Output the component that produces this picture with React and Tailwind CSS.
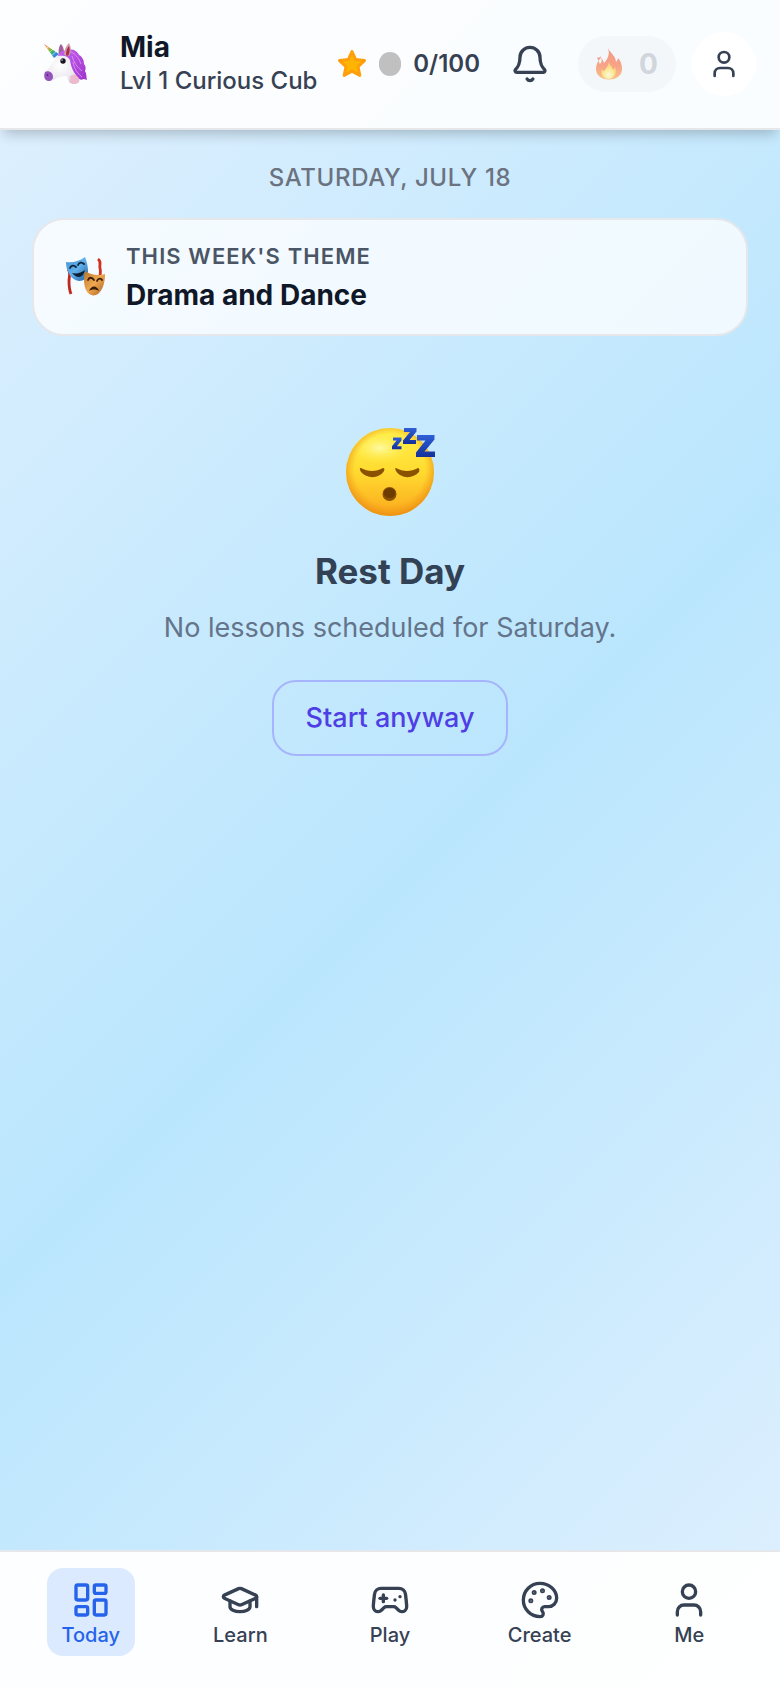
import { Bell, Gamepad2, GraduationCap, LayoutDashboard, Palette, User } from "lucide-react";

const NAV_ITEMS = [
  { label: "Today", icon: LayoutDashboard, active: true },
  { label: "Learn", icon: GraduationCap },
  { label: "Play", icon: Gamepad2 },
  { label: "Create", icon: Palette },
  { label: "Me", icon: User },
];

function Unicorn({ className }) {
  return (
    <svg viewBox="0 0 44 42" className={className} aria-hidden="true">
      <defs>
        <linearGradient id="horn" x1="0" y1="0" x2="1" y2="1">
          <stop offset="0" stopColor="#f0524f" />
          <stop offset="0.25" stopColor="#f4a93a" />
          <stop offset="0.5" stopColor="#4fb848" />
          <stop offset="0.75" stopColor="#2f8fe0" />
          <stop offset="1" stopColor="#6a4fd8" />
        </linearGradient>
        <radialGradient id="coat" cx="0.45" cy="0.4" r="0.7">
          <stop offset="0" stopColor="#ffffff" />
          <stop offset="0.6" stopColor="#eeeaf1" />
          <stop offset="1" stopColor="#d3b4c6" />
        </radialGradient>
        <linearGradient id="mane" x1="0" y1="0" x2="1" y2="1">
          <stop offset="0" stopColor="#c463ee" />
          <stop offset="1" stopColor="#a035cc" />
        </linearGradient>
      </defs>
      <path d="M15 12c-1-5 0-9 2-11 2 2 3 5 3 9z" fill="#a2609c" />
      <path
        d="M13 13c4-4 12-3 15 2 3 5 3 10 4 14 2 4 4 7 3 10-3 3-8 2-10 0-1-3-1-5-3-6-4 0-8 1-11 3-3 2-7 3-9 1-2-3-2-6 0-9 4-4 8-10 11-15z"
        fill="url(#coat)"
      />
      <path d="M26 33c1 2 1 5 0 7 3 1 7 1 9-1 1-3-1-6-2-8z" fill="#edb9cf" />
      <path d="M1 29c3-2 8 0 8 5 0 2-2 4-4 4-4 0-6-4-4-9z" fill="#9553bd" />
      <path
        d="M14 13c1-4 5-6 8-5 4-3 11-1 13 4 4 2 5 6 5 9 2 2 2 5 1 7 2 3 1 6 2 9-2-1-3-1-4-1-2 2-4 0-5-2-4-4-7-9-8-17-2-4-6-5-12-4z"
        fill="url(#mane)"
      />
      <path
        d="M27 9c6 3 8 7 10 12m-9-8c2 7 5 11 10 15m-9-9c1 6 4 11 9 15"
        fill="none"
        stroke="#db94f6"
        strokeWidth="0.9"
      />
      <path d="M20 12c0-5 2-9 5-12 2 4 3 9 0 13z" fill="#d49aa8" />
      <path d="M22 12c0-4 1-7 3-9 1 3 1 7-1 10z" fill="#a62f4a" />
      <path d="M0 1l15 10-5 4z" fill="url(#horn)" />
      <path d="M3 5l2-2M6 9l3-3M8 12l5-4" stroke="#fff" strokeWidth="0.5" />
      <circle cx="19" cy="18" r="2.7" fill="#1c1420" />
      <circle cx="18" cy="17" r="0.7" fill="#fff" />
      <circle cx="3.500" cy="32" r="0.9" fill="#5a2680" />
    </svg>
  );
}

function Star({ className }) {
  return (
    <svg viewBox="0 0 30 30" className={className} aria-hidden="true">
      <path
        d="M15 2.500l3.700 8.100 8.800 1-6.500 6 1.800 8.800-7.800-4.300-7.800 4.300L9 17.600l-6.500-6 8.800-1z"
        fill="#ffb400"
        stroke="#ff9f0c"
        strokeWidth="3"
        strokeLinejoin="round"
      />
    </svg>
  );
}

function Flame({ className }) {
  return (
    <svg viewBox="0 0 26 32" className={className} aria-hidden="true">
      <defs>
        <linearGradient id="flame" x1="0" y1="0" x2="0" y2="1">
          <stop offset="0" stopColor="#f4583a" />
          <stop offset="0.6" stopColor="#fb6f3c" />
          <stop offset="1" stopColor="#fda03a" />
        </linearGradient>
        <radialGradient id="core" cx="0.5" cy="0.75" r="0.6">
          <stop offset="0" stopColor="#fffbd0" />
          <stop offset="0.6" stopColor="#ffe04a" />
          <stop offset="1" stopColor="#ffb83c" />
        </radialGradient>
      </defs>
      <path
        d="M12 0c2 5 8 8 8 14 1-1 2-3 2-4 3 3 4 7 4 11 0 6-5 10.500-13 10.500S0 27 0 21c0-3 1-6 3-9 0 2 0 3 1 4 2-2 2-4 1-6 1 1 2 2 3 5 4-4 6-9 4-15z"
        fill="url(#flame)"
      />
      <path d="M1 9c1 1 3 1 4-1 0 2-1 4-3 4z" fill="#f4583a" />
      <path
        d="M13 14c0 3 4 5 4 8 1-1 2-2 2-3 2 5 0 11-6 12-6 0-9-5-7-10 1 1 1 2 2 2 2-2 4-5 5-9z"
        fill="url(#core)"
      />
    </svg>
  );
}

function Masks({ className }) {
  return (
    <svg viewBox="0 0 40 40" className={className} aria-hidden="true">
      <defs>
        <linearGradient id="comedy" x1="0" y1="0" x2="1" y2="1">
          <stop offset="0" stopColor="#3f92d6" />
          <stop offset="0.5" stopColor="#62b0ea" />
          <stop offset="1" stopColor="#1c5fa0" />
        </linearGradient>
        <linearGradient id="tragedy" x1="0" y1="0" x2="1" y2="1">
          <stop offset="0" stopColor="#b8742e" />
          <stop offset="0.5" stopColor="#f0a850" />
          <stop offset="1" stopColor="#a85f20" />
        </linearGradient>
      </defs>
      <path
        d="M2 12c3 4 1 8 1 12 0 5 0 8 2 13"
        fill="none"
        stroke="#c0281e"
        strokeWidth="2.800"
      />
      <path
        d="M32 2c4 3 1 6 2 9 1 4 0 6 0 9"
        fill="none"
        stroke="#d0301e"
        strokeWidth="2.800"
      />
      <path d="M0 5c7 1 14-1 19-5 2 5 3 10 3 15-1 6-4 9-9 9C5 23 0 14 0 5z" fill="url(#comedy)" />
      <path
        d="M4 11c1-3 4-3 6-1M12 8c1-3 4-3 6-1"
        fill="none"
        stroke="#0c2038"
        strokeWidth="1.800"
        strokeLinecap="round"
      />
      <path d="M6 16c5 1 9 0 13-3-1 4-3 7-6 7s-5-2-7-4z" fill="#0c2038" />
      <path
        d="M19 14c6 4 13 5 20 3 0 8-2 16-7 20-3 2-7 2-10-1-4-4-5-14-3-22z"
        fill="url(#tragedy)"
      />
      <path
        d="M22 23c1-3 4-3 6 0M31 24c1-3 4-3 5-1"
        fill="none"
        stroke="#3a1c08"
        strokeWidth="1.800"
        strokeLinecap="round"
      />
      <path d="M23 34c2-6 8-6 10 0-3-2-7-2-10 0z" fill="#3a1c08" />
    </svg>
  );
}

function SleepingFace({ className }) {
  return (
    <svg viewBox="0 0 96 96" className={className} aria-hidden="true">
      <defs>
        <linearGradient id="face" x1="0" y1="0" x2="0" y2="1">
          <stop offset="0" stopColor="#fff04a" />
          <stop offset="0.5" stopColor="#ffdb30" />
          <stop offset="1" stopColor="#fba81c" />
        </linearGradient>
        <radialGradient id="rim" cx="0.5" cy="0.47" r="0.54">
          <stop offset="0.74" stopColor="#f59a1a" stopOpacity="0" />
          <stop offset="1" stopColor="#e88a10" stopOpacity="0.85" />
        </radialGradient>
        <radialGradient id="shine" cx="0.5" cy="0.5" r="0.5">
          <stop offset="0" stopColor="#fffcb0" stopOpacity="0.9" />
          <stop offset="1" stopColor="#fff04a" stopOpacity="0" />
        </radialGradient>
        <linearGradient id="zed" x1="0" y1="0" x2="0" y2="1">
          <stop offset="0" stopColor="#2f5fd8" />
          <stop offset="1" stopColor="#14309c" />
        </linearGradient>
      </defs>
      <circle cx="48" cy="50" r="44" fill="url(#face)" />
      <ellipse cx="38" cy="26" rx="30" ry="16" fill="url(#shine)" />
      <circle cx="48" cy="50" r="44" fill="url(#rim)" />
      <path
        d="M19 46c7 4 15 4 22 0 1 0 2 1 1 3-5 8-17 8-23 1-1-2-2-4 0-4zM54 46c7 4 15 4 22 0 1 0 2 2 1 4-6 7-18 7-23-1-1-2-1-3 0-3z"
        fill="#8a5200"
      />
      <circle cx="47.500" cy="72" r="7" fill="#8a5200" />
      <path d="M42 69c3-4 9-4 11 0 1 4-1 7-5 7-5 0-7-3-6-7z" fill="#6e3c00" />
      <g fill="url(#zed)">
        <path d="M51 15.500h8.500v3l-4.600 5.700h4.600v3H50v-3l4.600-5.700H51z" />
        <path d="M62 6h12.500v3.500l-7 8.500H74v4H61v-3.500L68 10h-6z" />
        <path d="M75 13h17.500v4.500L82.500 29.500H93v5.500H74V30.500l9.500-12H75z" />
      </g>
    </svg>
  );
}

export default function App() {
  return (
    <div className="flex min-h-screen flex-col bg-linear-135 from-[#e0f0fe] via-[#bae6fd] via-52% to-[#e0f0fe] font-['Inter',sans-serif]">
      <header className="flex h-[130px] items-center border-b-2 border-gray-200 bg-white/90 pl-10 pr-6 shadow-[0_8px_12px_-4px_rgba(0,0,0,0.22)]">
        <Unicorn className="mx-1 h-[42px] w-[44px] shrink-0" />
        <div className="ml-7 whitespace-nowrap">
          <p className="text-[28px] leading-[34px] font-bold text-gray-900">Mia</p>
          <p className="text-[24px] leading-[34px] font-medium text-gray-700">Lvl 1 Curious Cub</p>
        </div>

        {/* Stars earned today */}
        <div className="ml-auto flex items-center gap-3">
          <Star className="size-[30px]" />
          <span className="h-6 w-[22px] rounded-full bg-[#c0c0c0]" />
          <span className="text-[24px] leading-[32px] font-semibold text-gray-700">0/100</span>
        </div>

        <button type="button" aria-label="Notifications" className="ml-[30px] text-gray-700">
          <Bell className="size-10" />
        </button>

        {/* Streak */}
        <div className="ml-7 flex h-14 w-[98px] shrink-0 items-center justify-between rounded-full bg-slate-100/80 px-[18px]">
          <Flame className="h-8 w-[26px] opacity-60" />
          <span className="text-[28px] leading-[34px] font-bold text-gray-300">0</span>
        </div>

        <button
          type="button"
          aria-label="Profile"
          className="ml-4 flex size-16 shrink-0 items-center justify-center rounded-full bg-white text-gray-700"
        >
          <User className="size-8" />
        </button>
      </header>

      <main className="flex flex-1 flex-col px-8 pt-8">
        <p className="text-center text-[24px] leading-[32px] font-medium tracking-wide text-[#6b7280] uppercase">
          Saturday, July 18
        </p>

        <section className="mt-6 flex items-center gap-5 rounded-[32px] border-2 border-gray-200 bg-white/75 px-8 py-5">
          <Masks className="size-10 shrink-0" />
          <div>
            <p className="text-[22px] leading-[32px] font-semibold tracking-wider text-gray-600 uppercase">
              This week's theme
            </p>
            <h2 className="mt-1 text-[28px] leading-[38px] font-bold text-gray-900">
              Drama and Dance
            </h2>
          </div>
        </section>

        <section className="mt-[86px] flex flex-col items-center text-center">
          <SleepingFace className="size-24" />
          <h1 className="mt-7 text-[35px] leading-[50px] font-bold text-[#334155]">Rest Day</h1>
          <p className="mt-3 text-[27px] leading-[40px] text-[#64748b]">
            No lessons scheduled for Saturday.
          </p>
          <button
            type="button"
            className="mt-8 rounded-3xl border-2 border-[#a5b4fc] px-8 py-4 text-[27px] leading-[40px] font-medium text-[#4f3ee5]"
          >
            Start anyway
          </button>
        </section>
      </main>

      <nav className="grid grid-cols-5 justify-items-center border-t-2 border-gray-200 bg-white/95 px-4 pt-4 pb-8">
        {NAV_ITEMS.map(({ label, icon: Icon, active }) => (
          <a
            key={label}
            href="#"
            aria-current={active ? "page" : undefined}
            className={`flex h-[88px] min-w-[88px] flex-col items-center rounded-2xl px-3 pt-3 text-[20px] leading-[30px] font-medium ${
              active ? "bg-[#dbeafe] text-[#2563eb]" : "text-gray-700"
            }`}
          >
            <Icon className="size-10" />
            {label}
          </a>
        ))}
      </nav>
    </div>
  );
}
